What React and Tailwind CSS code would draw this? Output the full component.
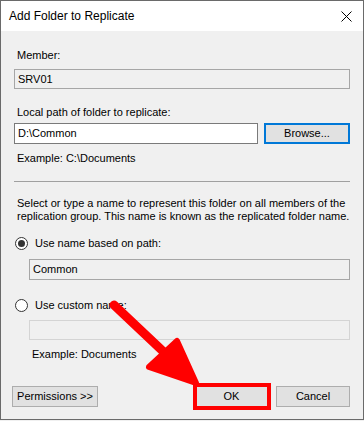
import React from "react";

function Radio({ checked }) {
  return (
    <span className="relative flex h-[13px] w-[13px] shrink-0 items-center justify-center rounded-full border border-[#333333] bg-white">
      {checked && <span className="h-[7px] w-[7px] rounded-full bg-[#333333]" />}
    </span>
  );
}

export default function App() {
  return (
    <div className="relative h-[421px] w-[364px] bg-[#f0f0f0] font-['Liberation_Sans',Arial,sans-serif] text-[11px] leading-[15px] text-black">
      <div className="flex h-[420px] w-[364px] flex-col border border-[#6a6a6a] bg-[#f0f0f0]">
        {/* title bar */}
        <div className="flex h-[30px] shrink-0 items-center justify-between bg-white pl-[8px] pr-[10px]">
          <span className="pt-[1px] text-[12px]">Add Folder to Replicate</span>
          <svg width="11" height="11" viewBox="0 0 11 11" className="mr-[1px]">
            <path d="M0.5 0.5 L10.5 10.5 M10.5 0.5 L0.5 10.5" stroke="#000" strokeWidth="1" />
          </svg>
        </div>
        {/* body */}
        <div className="flex flex-1 flex-col px-[13px]">
          <div className="mt-[17px] pl-[3px]">Member:</div>
          <div className="mt-[6px] flex h-[20px] items-center border border-[#a6a6a6] bg-[#f0f0f0] pl-[3px]">SRV01</div>

          <div className="mt-[16px] pl-[3px]">Local path of folder to replicate:</div>
          <div className="mt-[3px] flex h-[21px] gap-[6px]">
            <div className="flex flex-1 items-center border border-[#7a7a7a] bg-white pl-[3px]">D:\Common</div>
            <div className="flex w-[86px] items-center justify-center border-2 border-[#0078d7] bg-[#e1e1e1]">Browse...</div>
          </div>
          <div className="mt-[7px] pl-[3px]">Example: C:\Documents</div>

          <div className="mt-[15px] h-[1px] bg-[#a0a0a0]" />

          <div className="mt-[15px] pl-[3px] leading-[13px]">
            Select or type a name to represent this folder on all members of the replication group. This name is known as the replicated folder name.
          </div>

          <div className="mt-[13px] flex items-center gap-[7px] pl-[1px]">
            <Radio checked />
            <span>Use name based on path:</span>
          </div>
          <div className="ml-[15px] mt-[8px] flex h-[21px] items-center border border-[#a6a6a6] bg-[#f0f0f0] pl-[3px]">Common</div>

          <div className="mt-[18px] flex items-center gap-[7px] pl-[1px]">
            <Radio />
            <span>Use custom name:</span>
          </div>
          <div className="ml-[15px] mt-[7px] h-[20px] border border-[#d4d4d4] bg-[#f0f0f0]" />
          <div className="ml-[15px] mt-[7px] pl-[3px]">Example: Documents</div>

          <div className="mt-[24px] flex h-[21px] items-stretch">
            <div className="-ml-[2px] flex w-[86px] items-center justify-center border border-[#adadad] bg-[#e1e1e1]">Permissions &gt;&gt;</div>
            <div className="flex-1" />
            <div className="flex w-[75px] items-center justify-center border border-[#adadad] bg-[#e1e1e1]">OK</div>
            <div className="ml-[7px] flex w-[74px] items-center justify-center border border-[#adadad] bg-[#e1e1e1]">Cancel</div>
          </div>
        </div>
      </div>

      {/* annotation: red box around OK */}
      <div className="pointer-events-none absolute left-[193px] top-[383px] h-[27px] w-[78px] border-4 border-[#ff0000]" />
      {/* annotation: red arrow */}
      <svg className="pointer-events-none absolute left-0 top-0" width="364" height="421" viewBox="0 0 364 421">
        <line x1="114" y1="305" x2="168" y2="356" stroke="#ff0000" strokeWidth="9" strokeLinecap="round" />
        <polygon points="149,367 177,341 196,383" fill="#ff0000" stroke="#ff0000" strokeWidth="6" strokeLinejoin="round" />
      </svg>
    </div>
  );
}
